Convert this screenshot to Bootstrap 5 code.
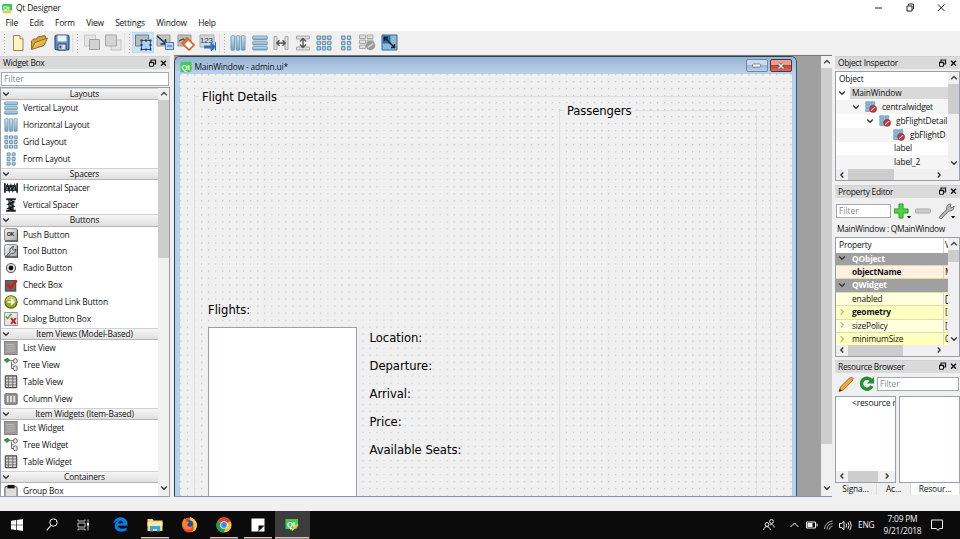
<!DOCTYPE html>
<html lang="en">
<head>
<meta charset="utf-8">
<title>Qt Designer</title>
<link href="https://cdn.jsdelivr.net/npm/bootstrap@5.3.0/dist/css/bootstrap.min.css" rel="stylesheet">
<style>
html,body{height:539px;overflow:hidden}
body{font:8.4px/12px "Open Sans","Noto Sans",sans-serif;letter-spacing:-.16px;color:#111;background:#f0f0f0;width:960px;white-space:nowrap}
svg{display:block;flex:none}
.titlebar{height:16px;padding-left:2px;font-size:8.4px}
.winbtns{width:84px;margin-right:15px}
.menus{height:15px;padding-left:5.5px}
.menus span{margin-right:11.3px}
.tools{height:25px;background:#f0f0f0}
.tool{width:21.6px;height:21px}
.tool.picked{background:#cce4f7;box-shadow:inset 0 0 0 .5px #a9d1f3}
.grip{width:8.4px;height:20px;background:radial-gradient(circle,#b3b3b3 .7px,transparent 1px) 3px 0/3px 3px repeat-y;border-left:1px solid #e2e2e2}
.workspace{height:442px}
.dock-left{width:170px;padding-top:1px}
.dock-right{width:125px;padding-top:1px}
.dock-title{height:13px;background:#dadada;padding:0 2px 0 3px;border-top:1px solid #d0d0d0;letter-spacing:-.28px}
.filter{border:1px solid #a5a9b2;background:#fff;color:#8b8b8b;padding-left:2px;line-height:11.5px;letter-spacing:0}
.box{border:1px solid #9aa0aa;background:#fff}
.group-head{height:12.8px;line-height:10.4px;background:linear-gradient(#f6f6f6,#dfdfdf);border-top:1px solid #d2d2d2;border-bottom:1px solid #b5b5b5;position:relative;padding-left:10px}
.group-head svg{position:absolute;left:1px;top:1px}
.witem{height:16.8px;padding:0 0 1px 3px;gap:5px;letter-spacing:-.15px}
.vbar{width:11px;background:#f0f0f0}
.vthumb,.hthumb{background:#cdcdcd}
.hbar{height:11px;background:#f0f0f0}
.mdi{width:658px;margin-left:4px;margin-right:3px;border-top:1px solid #777;border-bottom:1px solid #8b93a0;background:#a0a0a0}
.formwin{width:623px;background:#b7d0eb;border:1px solid #30414d;border-right:1.5px solid #1d626e;border-bottom:0;border-radius:6px 6px 0 0;padding:0 4px 0 5px}
.formtitle{height:17px;background:linear-gradient(#98b4d3,#b9d1ec);margin:0 -4px 0 -5px;padding:3px 4px 0 5px;border-radius:5px 5px 0 0}
.mini{width:22.5px;height:13px;margin-top:-3px;border:1px solid #6f87a5;border-radius:2px;background:linear-gradient(#c9dbef 45%,#9cb6d4 50%,#b9d2ec)}
.mini.closer{border-color:#6b2c2c;background:linear-gradient(#e2a096 45%,#c2402e 50%,#d2735d)}
.canvas{position:relative;overflow:hidden;background:radial-gradient(circle at .6px .6px,#c2c2c2 .5px,transparent .9px) 0 0/7.02px 7.02px #f0f0f0}
.canvas>*{position:absolute}
.frame{border:1px solid #dedede}
.lab{font:12.9px/16px "DejaVu Sans Condensed","DejaVu Sans",sans-serif;font-stretch:condensed;letter-spacing:-.02px;color:#000}
.lab.cap{background:#f0f0f0;padding:0 3px;letter-spacing:-.1px}
.trow{height:13.85px}
.prow{height:13.4px;border-bottom:.5px solid #dcdcb8}
.pname{flex:0 0 108px;padding-left:16px;position:relative;border-right:1px solid #d5d5d5;height:100%;line-height:12px}
.pname svg{position:absolute;left:2px;top:1.5px}
.pval{padding-left:1px;overflow:hidden;line-height:12px}
.psec{background:#a0a0a0;color:#fff;font-weight:700}
.psec .pname{border:0}
.p-rose{background:#fff0e0}.p-lite{background:#ffffdc}.p-yel{background:#ffffbf}
.btab{height:12px;border-right:1px solid #d9d9d9;line-height:12.5px}
.taskbar{height:28px;background:#0b0b0c;color:#f4f4f4}
.task{width:34.4px;height:28px}
.task.open{background:linear-gradient(#d9c5bd,#d9c5bd) center bottom/28px 1.5px no-repeat}
.task.active{background:linear-gradient(#d9c5bd,#d9c5bd) center bottom/34px 1.5px no-repeat #3c3c3d}
.clock{width:46px;line-height:12.4px;text-align:center;letter-spacing:-.2px}
</style>
<script src="https://cdn.jsdelivr.net/npm/bootstrap@5.3.0/dist/js/bootstrap.bundle.min.js"></script>
</head>
<body class="d-flex flex-column">
<svg width="0" height="0" class="position-absolute">
<defs>
<linearGradient id="blu" x2="0" y2="1"><stop stop-color="#d3e8f5"/><stop offset="1" stop-color="#6ba3c8"/></linearGradient>
<linearGradient id="gry" x2="1" y2="1"><stop stop-color="#fafafa"/><stop offset="1" stop-color="#a8a8a8"/></linearGradient>
<linearGradient id="fold" x2="1" y2="1"><stop stop-color="#fbe7a0"/><stop offset="1" stop-color="#c98f1c"/></linearGradient>
<symbol id="down" viewBox="0 0 8 8"><path d="M1.2 2.5 4 5.3 6.8 2.5" fill="none" stroke="#333" stroke-width="1.3"/></symbol>
<symbol id="up" viewBox="0 0 8 8"><path d="M1.2 5.3 4 2.5 6.8 5.3" fill="none" stroke="#444" stroke-width="1.3"/></symbol>
<symbol id="left" viewBox="0 0 8 8"><path d="M5.300 1.500 2.800 4 5.300 6.500" fill="none" stroke="#333" stroke-width="1.3"/></symbol>
<symbol id="right" viewBox="0 0 8 8"><path d="M2.700 1.500 5.200 4 2.700 6.500" fill="none" stroke="#333" stroke-width="1.3"/></symbol>
<symbol id="rthin" viewBox="0 0 8 8"><path d="M2.7 1.2 5.5 4 2.7 6.8" fill="none" stroke="#888" stroke-width="1"/></symbol>
<symbol id="floatclose" viewBox="0 0 20 9"><path d="M3 3V1h4.5v4H6" fill="none" stroke="#111" stroke-width="1.2"/><path d="M1.5 3.2h4v4h-4z" fill="#eee" stroke="#111"/><path d="M1 3.6h5" stroke="#111" stroke-width="1.2"/><path d="m13 1.7 5 5M18 1.7l-5 5" stroke="#111" stroke-width="1.4"/></symbol>
<symbol id="vlay" viewBox="0 0 16 16"><g fill="url(#blu)" stroke="#6d93ae" stroke-width=".9"><rect x=".8" y="1" width="14.400" height="3.600" rx=".6"/><rect x=".8" y="6.2" width="14.400" height="3.600" rx=".6"/><rect x=".8" y="11.4" width="14.400" height="3.600" rx=".6"/></g></symbol>
<symbol id="hlay" viewBox="0 0 16 16"><g fill="url(#blu)" stroke="#6d93ae" stroke-width=".9"><rect x="1" y=".8" width="3.600" height="14.400" rx=".6"/><rect x="6.2" y=".8" width="3.600" height="14.400" rx=".6"/><rect x="11.4" y=".8" width="3.600" height="14.400" rx=".6"/></g></symbol>
<symbol id="glay" viewBox="0 0 16 16"><g fill="#b5d6ea" stroke="#6189a6" stroke-width="1"><path d="M1 1h3.4v3.4H1zM6.3 1h3.4v3.4H6.3zM11.6 1H15v3.4h-3.4zM1 6.3h3.4v3.4H1zM6.3 6.3h3.4v3.4H6.3zM11.6 6.3H15v3.4h-3.4zM1 11.6h3.4V15H1zM6.3 11.6h3.4V15H6.3zM11.6 11.6H15V15h-3.4z"/></g></symbol>
<symbol id="flay" viewBox="0 0 16 16"><g fill="#b5d6ea" stroke="#6189a6" stroke-width="1"><path d="M3.6 1H7v3.4H3.6zM9.3 1h3.4v3.4H9.3zM3.6 6.3H7v3.4H3.6zM9.3 6.3h3.4v3.4H9.3zM3.6 11.6H7V15H3.6zM9.3 11.6h3.4V15H9.3z"/></g></symbol>
<symbol id="hspc" viewBox="0 0 16 16"><path d="M1 2.500v11M15 2.500v11" stroke="#222" stroke-width="2"/><path d="M2.500 4.500h11v7h-11z" fill="#3b474b"/><path d="m2 11 2-6 2 6 2-6 2 6 2-6 2 6" fill="none" stroke="#11191b" stroke-width="1.800"/><path d="m3 10 1-3M7 10l1-3M11 10l1-3" stroke="#a5bbc4" stroke-width=".9"/></symbol>
<symbol id="vspc" viewBox="0 0 16 16"><path d="M2.500 1.500h11M2.500 14.500h11" stroke="#222" stroke-width="2.400"/><path d="M5 3h6v10H5z" fill="#3b474b"/><path d="m5 2 6 2.5L5 7l6 2.5L5 12l6 2" fill="none" stroke="#11191b" stroke-width="1.800"/><path d="m6 3 3 1.2M6 8l3 1.2" stroke="#a5bbc4" stroke-width=".9"/></symbol>
<symbol id="push" viewBox="0 0 16 16"><rect x=".7" y=".7" width="14.5" height="14" rx="2" fill="url(#gry)" stroke="#777"/><path d="M1 15h14.5V2" fill="none" stroke="#444" stroke-width="1.2"/><text x="3" y="9.4" font-size="6" font-weight="bold" fill="#222" font-family="Liberation Sans">OK</text></symbol>
<symbol id="toolb" viewBox="0 0 16 16"><rect x=".7" y=".7" width="14.5" height="14" rx="2" fill="url(#gry)" stroke="#777"/><path d="M1 15h14.5V2" fill="none" stroke="#444" stroke-width="1.2"/><path d="M3 13.5 7 9c-1-3 1-6 4-6L9.3 5.5l1.6 1.8L13.5 6c.4 3-2 5-5 4.500L5 14z" fill="#d5d9dd" stroke="#333"/></symbol>
<symbol id="radio" viewBox="0 0 16 16"><circle cx="8" cy="8" r="5.200" fill="#e8e8e8" stroke="#555" stroke-width="1.300"/><circle cx="8" cy="8" r="2.800" fill="#111"/></symbol>
<symbol id="check" viewBox="0 0 16 16"><rect x="1.5" y="3" width="12" height="12" fill="#666" stroke="#3a3a3a"/><path d="m3.500 7 4 4.500L14.500 2.500" fill="none" stroke="#d21a1a" stroke-width="2.800"/></symbol>
<symbol id="cmd" viewBox="0 0 16 16"><circle cx="8" cy="8" r="7" fill="#95ab1e" stroke="#4d5c0c" stroke-width="1.2"/><path d="M2 7a6 6 0 0 1 12 0c-4-2-8-2-12 0z" fill="#c2ce60"/><path d="M4 8h7M8 4.700 11.300 8 8 11.300" fill="none" stroke="#fff" stroke-width="1.900"/></symbol>
<symbol id="dlg" viewBox="0 0 16 16"><rect x=".7" y=".7" width="14.600" height="14.600" fill="#e6e6e6" stroke="#888"/><path d="m2 5 2 2.500L8.500 2" fill="none" stroke="#52b043" stroke-width="1.800"/><path d="m8 7 5.500 6.500M13.500 7 8 13.500" stroke="#c61e23" stroke-width="2.200"/></symbol>
<symbol id="list" viewBox="0 0 16 16"><rect x=".5" y=".5" width="14.500" height="15" fill="#9c9c9c" stroke="#7c7c7c"/><path d="M3 4h9M3 6.500h9M3 9h9M3 11.500h9" stroke="#bdbdbd" stroke-width="1"/></symbol>
<symbol id="tree" viewBox="0 0 16 16"><path d="m.5 2 4-1.500 2 2L3 5z" fill="#2fa12f" stroke="#1b601b"/><path d="M7 3h3.500M8.500 4v8H11M8.500 8H11" fill="none" stroke="#555" stroke-width="1"/><rect x="11" y=".8" width="4" height="5" rx="1.500" fill="#eee" stroke="#555"/><rect x="11" y="9" width="4" height="5.500" rx="1.500" fill="#eee" stroke="#555"/></symbol>
<symbol id="tbl" viewBox="0 0 16 16"><rect x="1.500" y="1" width="13" height="13.500" rx="1" fill="#d8d8d8" stroke="#444" stroke-width="1.300"/><path d="M1.500 4.500h13M1.500 8h13M1.500 11.300h13M5 1v13.500M10 1v13.500" stroke="#666" stroke-width="1"/></symbol>
<symbol id="col" viewBox="0 0 16 16"><rect x="1" y="2" width="14" height="12" rx="1" fill="#999" stroke="#555"/><path d="M3 4h2.500v8H3zM6.700 4h2.600v8H6.700zM10.500 4H13v8h-2.500z" fill="#eee" stroke="#777" stroke-width=".5"/></symbol>
<symbol id="grp" viewBox="0 0 16 16"><rect x="1" y="3" width="14" height="14" rx="2" fill="#ddd" stroke="#666" stroke-width="1.300"/><path d="M4 1h8v4H4z" fill="#111"/></symbol>
<symbol id="lay0" viewBox="0 0 16 16"><path d="M1 1h6v3.500H1zM8 1h5v3.500H8zM1 5.500h6V9H1zM8 5.500h5V9H8zM1 10h6v4H1z" fill="#8bbbd9" stroke="#6d9cbc"/><circle cx="10.800" cy="10.500" r="4.600" fill="#b73b43" stroke="#933"/><path d="m8 12.800 5.500-4.600" stroke="#e7c4c8" stroke-width="1.400"/></symbol>
<symbol id="qt" viewBox="0 0 16 16"><path d="M2 1h13.500v11.500L13 15H.5V3z" fill="#41cd52"/><text x="2" y="11.500" font-size="10" font-weight="bold" fill="#fff" font-family="Liberation Sans">Qt</text></symbol>
</defs></svg>

<header class="titlebar bg-white d-flex align-items-center">
  <svg width="10" height="12" viewBox="0 0 10 12"><path d="M1 2h9v6.500H0V3z" fill="#3ec750"/><path d="M1 9h8v2.300H1z" fill="#e5cc47"/><text x="1" y="7.500" font-size="6" font-weight="bold" fill="#fff" font-family="Liberation Sans">Qt</text></svg>
  <span class="ms-1">Qt Designer</span>
  <div class="ms-auto winbtns"><svg width="84" height="14" viewBox="0 0 84 14"><path d="M14 7.500h7M46 5.500h5v5h-5zM47.500 5V3.500h5v5H51M77 4l6.500 6.500M83.500 4 77 10.500" transform="translate(0 -.5)" fill="none" stroke="#222" stroke-width="1"/></svg></div>
</header>
<nav class="menus bg-white d-flex align-items-center"><span>File</span><span>Edit</span><span>Form</span><span>View</span><span>Settings</span><span>Window</span><span>Help</span></nav>

<div class="tools d-flex align-items-center">
  <div class="grip border-0" style="width:7.600px"></div>
  <div class="tool d-flex align-items-center justify-content-center"><svg width="16" height="18" viewBox="0 0 16 18"><path d="M3.500 1.500h6.500l3 3.200V16.500h-9.500z" fill="#fff4c4" stroke="#938963"/><path d="M10 1.500v3.300h3" fill="#fff" stroke="#938963"/></svg></div>
  <div class="tool d-flex align-items-center justify-content-center"><svg width="19" height="18" viewBox="0 0 19 18"><path d="M1.500 15V7l2-2h3l1-2L15 1.500l1 3" fill="#d8a43c" stroke="#946b1b"/><path d="M1.500 15.500 5 8.500 17.500 4 14 11.500z" fill="url(#fold)" stroke="#946b1b"/></svg></div>
  <div class="tool d-flex align-items-center justify-content-center"><svg width="16" height="17" viewBox="0 0 16 17"><rect x="1" y="1" width="14" height="15" rx="2" fill="#5f8fcb" stroke="#2d527e" stroke-width="1.200"/><path d="M3.500 1.500h9v6h-9z" fill="#edf3fb"/><path d="M4 10h8v6H4z" fill="#d9dfe6" stroke="#446"/><path d="M5.500 11.500h2v3h-2z" fill="#3b5778"/></svg></div>
  <div class="grip"></div>
  <div class="tool d-flex align-items-center justify-content-center"><svg width="18" height="17" viewBox="0 0 18 17"><path d="M1.500 1h11v11h-11z" fill="#e4e4e4" stroke="#c7c7c7"/><path d="M6.500 5.500h10v10h-10z" fill="#d2d2d2" stroke="#a0a0a0"/></svg></div>
  <div class="tool d-flex align-items-center justify-content-center"><svg width="18" height="17" viewBox="0 0 18 17"><path d="M7 6h10v10H7z" fill="#e6e6e6" stroke="#c0c0c0"/><path d="M1.500 1h11v11h-11z" fill="#d4d4d4" stroke="#a6a6a6"/></svg></div>
  <div class="grip"></div>
  <div class="tool picked d-flex align-items-center justify-content-center"><svg width="18" height="17" viewBox="0 0 18 17"><path d="M1.500 1h13v11h-13z" fill="#bcbcbc" stroke="#777"/><rect x="7.500" y="6.500" width="9" height="9" fill="#acd0ed" stroke="#2b6098"/><path d="M6.500 5.500h2v2h-2zM11 5.500h2v2h-2zM15.500 5.500h2v2h-2zM6.500 10h2v2h-2zM15.500 10h2v2h-2zM6.500 14.500h2v2h-2zM11 14.500h2v2h-2zM15.500 14.500h2v2h-2z" fill="#143f75"/></svg></div>
  <div class="tool d-flex align-items-center justify-content-center"><svg width="18" height="17" viewBox="0 0 18 17"><path d="M1 1h13v11H1z" fill="#c4c4c4" stroke="#999"/><path d="m1 2 8 7M9.500 5v5h-5" fill="none" stroke="#123658" stroke-width="1.600"/><rect x="9.500" y="8.500" width="8" height="7" fill="#b9d3ee" stroke="#4d7eb4"/><path d="M11 12h5" stroke="#2e69aa"/></svg></div>
  <div class="tool d-flex align-items-center justify-content-center"><svg width="18" height="17" viewBox="0 0 18 17"><path d="M1 1h13v11H1z" fill="#bdbdbd" stroke="#999"/><path d="m2 7 4-2 4 2" fill="none" stroke="#444" stroke-width="1.200"/><path d="m5 9 5-5 7 7-5 5z" fill="#fff" stroke="#d46121" stroke-width="1.700"/><path d="m5 9 5-5 2 2-5 5z" fill="#e66f2b"/></svg></div>
  <div class="tool d-flex align-items-center justify-content-center"><svg width="18" height="17" viewBox="0 0 18 17"><path d="M1 1h14v12H1z" fill="#d1d8df" stroke="#aaa"/><text x="1" y="9" font-size="8" fill="#153d69" font-family="Liberation Sans">123</text><path d="M5 13h8" stroke="#2d71bf" stroke-width="3"/><path d="m12 9 5 4-5 3.700zM16.500 8v8.500" fill="#2d71bf" stroke="#2d71bf"/></svg></div>
  <div class="grip"></div>
  <div class="tool d-flex align-items-center justify-content-center"><svg width="16" height="16"><use href="#hlay"/></svg></div>
  <div class="tool d-flex align-items-center justify-content-center"><svg width="16" height="16"><use href="#vlay"/></svg></div>
  <div class="tool d-flex align-items-center justify-content-center"><svg width="16" height="16" viewBox="0 0 16 16"><path d="M1 1.500h3v13H1zM12 1.500h3v13h-3z" fill="#ddd" stroke="#aaa"/><path d="M4 8h8M6.500 5.200 3.700 8l2.800 2.800M9.500 5.200 12.300 8l-2.800 2.800" fill="none" stroke="#555" stroke-width="1.400"/></svg></div>
  <div class="tool d-flex align-items-center justify-content-center"><svg width="16" height="16" viewBox="0 0 16 16"><path d="M1.500 1h13v3h-13zM1.500 12h13v3h-13z" fill="#ddd" stroke="#aaa"/><path d="M8 3.500v9M5 6.500l3-3 3 3M5 9.500l3 3 3-3" fill="none" stroke="#555" stroke-width="1.400"/></svg></div>
  <div class="tool d-flex align-items-center justify-content-center"><svg width="16" height="16"><use href="#glay"/></svg></div>
  <div class="tool d-flex align-items-center justify-content-center"><svg width="16" height="16"><use href="#flay"/></svg></div>
  <div class="tool d-flex align-items-center justify-content-center"><svg width="18" height="17" viewBox="0 0 18 17"><path d="M1.500 1h6v3.500h-6zM9 1h6v3.500H9zM1.500 6h6v3.500h-6zM9 6h6v3.500H9zM1.500 11h6v3.500h-6z" fill="#ddd" stroke="#aaa"/><circle cx="12.500" cy="11.500" r="4.700" fill="#999"/><path d="m9.700 13.500 5.500-4" stroke="#ddd" stroke-width="1.500"/></svg></div>
  <div class="tool d-flex align-items-center justify-content-center"><svg width="17" height="17" viewBox="0 0 17 17"><path d="M1 1h15v15H1z" fill="#8db9d8" stroke="#35668e"/><path d="M1.500 1.500h8v8h-8z" fill="#2f6fa3"/><path d="m4 4 9 9M3.500 7v-3.500h3.500M13.500 10v3.500h-3.500" fill="none" stroke="#0d2338" stroke-width="1.600"/></svg></div>
</div>

<main class="workspace d-flex">
  <aside class="dock-left d-flex flex-column">
    <div class="dock-title d-flex align-items-center justify-content-between"><span>Widget Box</span><svg width="20" height="9"><use href="#floatclose"/></svg></div>
    <div class="filter" style="height:14px;margin:2.500px 1px 1px">Filter</div>
    <div class="box d-flex flex-grow-1 overflow-hidden" style="min-height:0">
      <div class="flex-grow-1 overflow-hidden">
        <div class="group-head text-center"><svg width="8" height="8"><use href="#down"/></svg>Layouts</div>
        <div class="witem d-flex align-items-center"><svg width="14" height="14"><use href="#vlay"/></svg>Vertical Layout</div>
        <div class="witem d-flex align-items-center"><svg width="14" height="14"><use href="#hlay"/></svg>Horizontal Layout</div>
        <div class="witem d-flex align-items-center"><svg width="14" height="14"><use href="#glay"/></svg>Grid Layout</div>
        <div class="witem d-flex align-items-center"><svg width="14" height="14"><use href="#flay"/></svg>Form Layout</div>
        <div class="group-head text-center"><svg width="8" height="8"><use href="#down"/></svg>Spacers</div>
        <div class="witem d-flex align-items-center"><svg width="14" height="14"><use href="#hspc"/></svg>Horizontal Spacer</div>
        <div class="witem d-flex align-items-center"><svg width="14" height="14"><use href="#vspc"/></svg>Vertical Spacer</div>
        <div class="group-head text-center"><svg width="8" height="8"><use href="#down"/></svg>Buttons</div>
        <div class="witem d-flex align-items-center"><svg width="14" height="14"><use href="#push"/></svg>Push Button</div>
        <div class="witem d-flex align-items-center"><svg width="14" height="14"><use href="#toolb"/></svg>Tool Button</div>
        <div class="witem d-flex align-items-center"><svg width="14" height="14"><use href="#radio"/></svg>Radio Button</div>
        <div class="witem d-flex align-items-center"><svg width="14" height="14"><use href="#check"/></svg>Check Box</div>
        <div class="witem d-flex align-items-center"><svg width="14" height="14"><use href="#cmd"/></svg>Command Link Button</div>
        <div class="witem d-flex align-items-center"><svg width="14" height="14"><use href="#dlg"/></svg>Dialog Button Box</div>
        <div class="group-head text-center"><svg width="8" height="8"><use href="#down"/></svg>Item Views (Model-Based)</div>
        <div class="witem d-flex align-items-center"><svg width="14" height="14"><use href="#list"/></svg>List View</div>
        <div class="witem d-flex align-items-center"><svg width="14" height="14"><use href="#tree"/></svg>Tree View</div>
        <div class="witem d-flex align-items-center"><svg width="14" height="14"><use href="#tbl"/></svg>Table View</div>
        <div class="witem d-flex align-items-center"><svg width="14" height="14"><use href="#col"/></svg>Column View</div>
        <div class="group-head text-center"><svg width="8" height="8"><use href="#down"/></svg>Item Widgets (Item-Based)</div>
        <div class="witem d-flex align-items-center"><svg width="14" height="14"><use href="#list"/></svg>List Widget</div>
        <div class="witem d-flex align-items-center"><svg width="14" height="14"><use href="#tree"/></svg>Tree Widget</div>
        <div class="witem d-flex align-items-center"><svg width="14" height="14"><use href="#tbl"/></svg>Table Widget</div>
        <div class="group-head text-center"><svg width="8" height="8"><use href="#down"/></svg>Containers</div>
        <div class="witem d-flex align-items-center"><svg width="14" height="14"><use href="#grp"/></svg>Group Box</div>
      </div>
      <div class="vbar d-flex flex-column align-items-center pb-1"><svg width="8" height="12"><use href="#up"/></svg><div class="vthumb w-100" style="height:158px"></div><svg class="mt-auto" width="8" height="8"><use href="#down"/></svg></div>
    </div>
  </aside>

  <section class="mdi d-flex">
    <div class="formwin d-flex flex-column">
      <div class="formtitle d-flex align-items-center"><svg width="12" height="12"><use href="#qt"/></svg><span style="margin-left:2.500px">MainWindow - admin.ui*</span>
        <div class="ms-auto d-flex" style="gap:1.500px"><div class="mini d-flex align-items-center justify-content-center"><svg width="9" height="5"><rect x=".5" y="1" width="8" height="3" rx="1" fill="#fff" stroke="#5b6c80" stroke-width=".8"/></svg></div><div class="mini closer d-flex align-items-center justify-content-center"><svg width="8" height="8" viewBox="0 0 8 8"><path d="m1.500 1.500 5 5M6.500 1.500l-5 5" stroke="#5d2a2a" stroke-width="2.600"/><path d="m1.500 1.500 5 5M6.500 1.500l-5 5" stroke="#fff" stroke-width="1.600"/></svg></div></div>
      </div>
      <div class="canvas flex-grow-1">
        <div class="frame" style="left:14px;top:22px;width:577px;height:500px"></div>
        <div class="frame" style="left:379px;top:36px;width:198px;height:500px"></div>
        <div class="lab cap" style="left:19px;top:15px">Flight Details</div>
        <div class="lab cap" style="left:384px;top:29px">Passengers</div>
        <div class="lab" style="left:28px;top:228px">Flights:</div>
        <div class="box" style="left:28px;top:252.500px;width:149px;height:200px"></div>
        <div class="lab" style="left:189.500px;top:256px">Location:</div>
        <div class="lab" style="left:189.500px;top:284px">Departure:</div>
        <div class="lab" style="left:189.500px;top:312px">Arrival:</div>
        <div class="lab" style="left:189.500px;top:340px">Price:</div>
        <div class="lab" style="left:189.500px;top:368px">Available Seats:</div>
      </div>
    </div>
    <div class="vbar ms-auto d-flex flex-column align-items-center pb-1"><svg width="8" height="12"><use href="#up"/></svg><div class="vthumb w-100" style="height:376px"></div><svg class="mt-auto" width="8" height="8"><use href="#down"/></svg></div>
  </section>

  <aside class="dock-right d-flex flex-column">
    <div class="dock-title d-flex align-items-center justify-content-between"><span>Object Inspector</span><svg width="20" height="9"><use href="#floatclose"/></svg></div>
    <div class="box d-flex flex-column" style="height:110px;margin-top:2px">
      <div class="d-flex overflow-hidden flex-grow-1">
        <div class="flex-grow-1 overflow-hidden" style="width:0">
          <div class="trow d-flex align-items-center" style="height:14px;padding-left:3px">Object</div>
          <div class="trow d-flex align-items-center"><svg width="8" height="8" style="margin:0 4px 0 2px"><use href="#down"/></svg><span class="flex-grow-1" style="background:#d9d9d9;padding-left:2px;line-height:12px">MainWindow</span></div>
          <div class="trow d-flex align-items-center" style="background:#f5f5f5;padding-left:16px;gap:5px"><svg width="8" height="8"><use href="#down"/></svg><svg width="12" height="12"><use href="#lay0"/></svg>centralwidget</div>
          <div class="trow d-flex align-items-center" style="padding-left:30px;gap:5px"><svg width="8" height="8"><use href="#down"/></svg><svg width="12" height="12"><use href="#lay0"/></svg>gbFlightDetail</div>
          <div class="trow d-flex align-items-center" style="background:#f5f5f5;padding-left:57px;gap:5px"><svg width="12" height="12"><use href="#lay0"/></svg>gbFlightD</div>
          <div class="trow d-flex align-items-center" style="padding-left:58px">label</div>
          <div class="trow d-flex align-items-center" style="background:#f5f5f5;padding-left:58px">label_2</div>
        </div>
        <div class="vbar d-flex flex-column align-items-center"><svg width="8" height="12"><use href="#up"/></svg><div class="vthumb w-100" style="height:30px"></div><svg class="mt-auto" width="8" height="12"><use href="#down"/></svg></div>
      </div>
      <div class="hbar d-flex align-items-center pe-3"><svg width="12" height="8"><use href="#left"/></svg><div class="hthumb h-100" style="width:46px"></div><svg class="ms-auto" width="8" height="8"><use href="#right"/></svg></div>
    </div>
    <div class="dock-title d-flex align-items-center justify-content-between" style="margin-top:3.500px"><span>Property Editor</span><svg width="20" height="9"><use href="#floatclose"/></svg></div>
    <div class="d-flex align-items-center" style="height:26px;padding-left:1px"><div class="filter" style="width:57px;height:14px">Filter</div>
      <svg width="66" height="18" viewBox="0 0 66 18" style="margin-left:3px"><path d="M5 2h4v5h5v4H9v5H5v-5H0V7h5z" fill="#4fd443" stroke="#229a24"/><path d="M13 14h4l-2 2.500zM57 14h4l-2 2.500z" fill="#111"/><rect x="21.500" y="7" width="15" height="4" rx="1" fill="#ccc" stroke="#aaa"/><path d="M45 15.500 53 7c-1-3 1-5 4-5l-1 3 2 1 2-2c0 4-2 5-5 5l-8 8z" fill="#b8b8b8" stroke="#777"/></svg></div>
    <div style="height:13px;padding-left:2px;line-height:10.500px;letter-spacing:-.3px">MainWindow : QMainWindow</div>
    <div class="box d-flex flex-column" style="height:120px">
      <div class="d-flex overflow-hidden flex-grow-1">
        <div class="flex-grow-1 overflow-hidden" style="width:0">
          <div class="d-flex" style="height:15px"><div class="pname" style="padding-left:3px;line-height:14px">Property</div><div class="pval" style="line-height:14px">V</div></div>
          <div class="prow psec d-flex"><div class="pname"><svg width="8" height="8"><use href="#down"/></svg>QObject</div></div>
          <div class="prow p-rose d-flex"><div class="pname fw-bold">objectName</div><div class="pval">M</div></div>
          <div class="prow psec d-flex"><div class="pname"><svg width="8" height="8"><use href="#down"/></svg>QWidget</div></div>
          <div class="prow p-lite d-flex"><div class="pname">enabled</div><div class="pval"><svg width="9" height="12"><path d="M1 2.500h8v8H1z M3 6l2 2 3-4" fill="#fff" stroke="#333"/></svg></div></div>
          <div class="prow p-yel d-flex"><div class="pname fw-bold"><svg width="8" height="8"><use href="#rthin"/></svg>geometry</div><div class="pval">[</div></div>
          <div class="prow p-lite d-flex"><div class="pname"><svg width="8" height="8"><use href="#rthin"/></svg>sizePolicy</div><div class="pval">[</div></div>
          <div class="prow p-yel d-flex"><div class="pname"><svg width="8" height="8"><use href="#rthin"/></svg>minimumSize</div><div class="pval">0</div></div>
        </div>
        <div class="vbar d-flex flex-column align-items-center"><svg width="8" height="12"><use href="#up"/></svg><div class="vthumb w-100" style="height:12px"></div><svg class="mt-auto" width="8" height="12"><use href="#down"/></svg></div>
      </div>
      <div class="hbar d-flex align-items-center pe-3"><svg width="12" height="8"><use href="#left"/></svg><div class="hthumb h-100" style="width:55px"></div><svg class="ms-auto" width="8" height="8"><use href="#right"/></svg></div>
    </div>
    <div class="dock-title d-flex align-items-center justify-content-between" style="margin-top:3px"><span>Resource Browser</span><svg width="20" height="9"><use href="#floatclose"/></svg></div>
    <div class="d-flex align-items-center" style="height:23px;padding-left:3px">
      <svg width="38" height="18" viewBox="0 0 38 18"><path d="M1 16.500 2.500 12 12 2.500l3 2.500-9.500 9.800z" fill="#f2a93c" stroke="#a2691d"/><path d="m12 2.500 1.500-1 2.500 2-1 1.500z" fill="#d98079"/><path d="m1 16.500 1-2.500 2 1.500z" fill="#222"/><path d="M33.500 5.500A5.500 5.500 0 1 0 34 11" fill="none" stroke="#239132" stroke-width="3.400"/><path d="M36 2v6.500h-7z" fill="#239132"/></svg>
      <div class="filter flex-grow-1" style="height:14px;margin-left:1px;margin-right:1px">Filter</div></div>
    <div class="d-flex" style="height:87px;gap:3px">
      <div class="box d-flex flex-column overflow-hidden" style="width:61px"><div class="overflow-hidden" style="padding-left:16px;letter-spacing:-.1px">&lt;resource r</div><div class="hbar d-flex align-items-center mt-auto"><svg width="12" height="8"><use href="#left"/></svg><div class="hthumb h-100" style="width:30px"></div><svg class="mx-auto" width="8" height="8"><use href="#right"/></svg></div></div>
      <div class="box flex-grow-1"></div>
    </div>
    <div class="d-flex text-center"><div class="btab" style="width:42px">Signa...</div><div class="btab" style="width:34px">Ac...</div><div class="btab bg-white flex-grow-1">Resour...</div></div>
  </aside>
</main>
<div style="height:14px"></div>
<footer class="taskbar d-flex align-items-center">
  <div class="task d-flex align-items-center justify-content-center"><svg width="12" height="12" viewBox="0 0 12 12"><path d="m0 1.800 5-.8v4.700H0zM5.700.9 12 0v5.700H5.700zM0 6.300h5V11l-5-.8zM5.700 6.300H12V12l-6.300-.9z" fill="#fff"/></svg></div>
  <div class="task d-flex align-items-center justify-content-center"><svg width="12" height="13" viewBox="0 0 12 13"><circle cx="7.500" cy="4.500" r="3.700" fill="none" stroke="#fff" stroke-width="1"/><path d="M5 7.500.7 12.300" stroke="#fff" stroke-width="1.100"/></svg></div>
  <div class="task d-flex align-items-center justify-content-center pe-1"><svg width="13" height="12" viewBox="0 0 13 12"><path d="M1 .500V2h7V.5M1 11.500V10h7v1.500M1 4h7v4H1zM11 .5v11" fill="none" stroke="#d5d5d5" stroke-width=".9"/><path d="M10 4h2v2.500h-2z" fill="#fff"/></svg></div>
  <div class="task d-flex align-items-center justify-content-center"><svg width="15" height="15" viewBox="0 0 15 15"><path d="M.5 7C1 2.500 4 .3 7.700.3c4.300 0 6.800 3 6.800 6.700v1.700H5c.2 3.300 5 4 8.600 1.800v3.100C8.500 16 1.700 14.500 1.700 9c0-2.500 1.500-4.300 3.500-5.200C3.200 4 1.400 5.300.5 7zM5.100 6.200h5C10 2.900 5.500 3 5.100 6.200z" fill="#0a7be0"/></svg></div>
  <div class="task open d-flex align-items-center justify-content-center"><svg width="16" height="14" viewBox="0 0 16 14"><path d="M.5 1h5l1 1.500h9V13H.5z" fill="#f5d777"/><path d="M.5 4h15v4H.5z" fill="#ffe9a0"/><path d="M3 8h10v5.500h-3V11H6v2.500H3z" fill="#3ba5df"/></svg></div>
  <div class="task d-flex align-items-center justify-content-center"><svg width="17" height="17" viewBox="0 0 17 17"><circle cx="8.500" cy="9" r="7.500" fill="#f5472c"/><path d="M9 1c3 1 7 4 7 8a7.500 7.500 0 0 1-5 7c3-4 2-8-2-10z" fill="#ffcb2e"/><circle cx="8.300" cy="8.200" r="4" fill="#284f9e"/><path d="M1 7c1-3 2-4 3-5l1 3 3 1-2 3c2 3 5 2 6 0 0 4-6 6-9 3-1-1-2-3-2-5z" fill="#fb8027"/></svg></div>
  <div class="task open d-flex align-items-center justify-content-center"><svg width="16" height="16" viewBox="0 0 16 16"><circle cx="8" cy="8" r="7.600" fill="#fbc52e"/><path d="M8 8 1.400 4.200A7.600 7.600 0 0 1 14.600 4.200z" fill="#dc4437"/><path d="M1.400 4.200A7.600 7.600 0 0 0 7.500 15.600L11 9.500 8 8z" fill="#239b58"/><path d="M8 4.200h6.600" stroke="#dc4437" stroke-width="1.500"/><circle cx="8" cy="8" r="3.800" fill="#fff"/><circle cx="8" cy="8" r="2.900" fill="#4284f3"/></svg></div>
  <div class="task open d-flex align-items-center justify-content-center"><svg width="14" height="14" viewBox="0 0 14 14"><path d="M.5.5h13v13H.5z" fill="#fff"/><path d="M7.500 13.500v-6h6z" fill="#0b0b0c"/></svg></div>
  <div class="task active d-flex align-items-center justify-content-center"><svg width="16" height="14" viewBox="0 0 16 14"><path d="M1.500 1H14v8l-2 2H8l-2 1.500V11H1.500z" fill="#40ca50"/><text x="3" y="8.500" font-size="7.500" font-weight="bold" fill="#fff" font-family="Liberation Sans">Qt</text><path d="m7 12 6-6.500 1.500 1.500L8.500 13z" fill="#edc547"/></svg></div>
  <div class="ms-auto d-flex align-items-center" style="padding-right:16px">
    <svg width="92" height="16" viewBox="762 0 92 16"><g fill="none" stroke="#eee" stroke-width="1"><circle cx="766" cy="7.500" r="1.900"/><path d="M762.700 13c.2-4.500 6.300-4.500 6.600 0"/><circle cx="770.500" cy="4.500" r="1.900"/><path d="M769 8c2-1.200 4 0 4.200 2.500M789.500 10l4-4 4 4"/><path d="M805.500 5h9v6h-9zM816 6.500v3"/><path d="M823.500 12a8.500 8.500 0 0 1 8-8M826 12.300a6 6 0 0 1 5.500-5.700M828.300 12.500a3.500 3.500 0 0 1 3.200-3.300" stroke="#aaa"/><path d="M838.500 6.500h2l2.500-2v8l-2.500-2h-2zM845 6.500q1.200 2 0 4M847 5.300q2 3.200 0 6.400M849 4.200q2.500 4.300 0 8.600"/></g><path d="M806.500 6h5v4h-5z" fill="#eee"/></svg>
    <span style="margin-left:3px;margin-right:5px">ENG</span>
    <div class="clock">7:09 PM<br>9/21/2018</div>
    <svg width="14" height="14" viewBox="0 0 14 14" style="margin-left:4.500px"><path d="M1.500 2h11v8.500H9.500L8 12.500l-1.500-2h-5z" fill="none" stroke="#eee"/></svg>
  </div>
</footer>
</body>
</html>
